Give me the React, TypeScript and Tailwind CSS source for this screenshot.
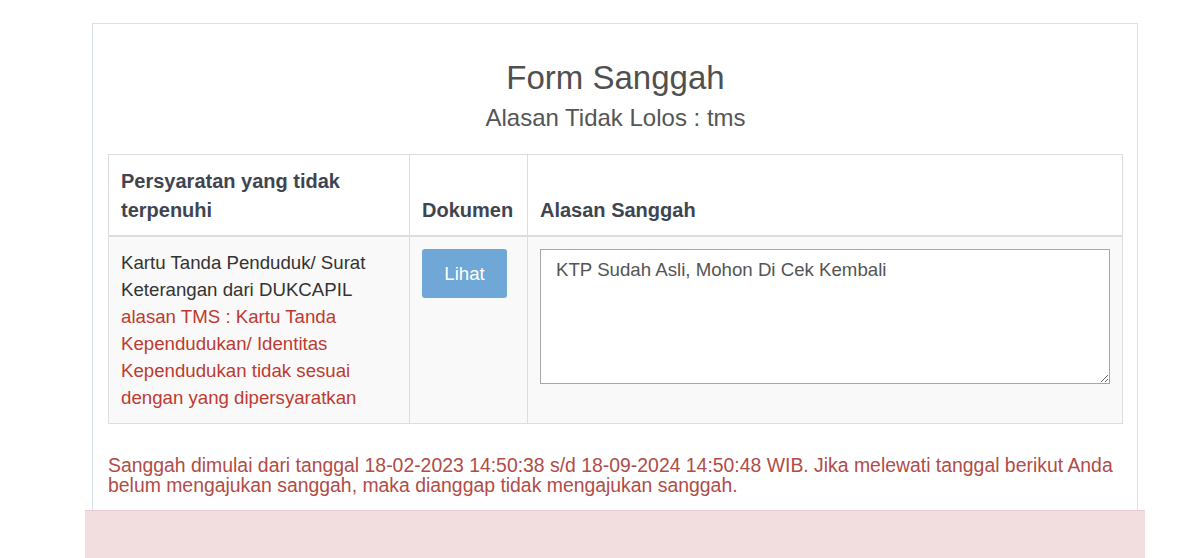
export default function App() {
  return (
    <div className="min-h-[558px] bg-white pt-[23px] font-['Liberation_Sans',Arial,sans-serif]">
      <div className="ml-[92px] w-[1046px] border border-b-0 border-[#d8e2ea] pb-[15px] pl-[15px] pr-[14px] pt-[36px]">
        <h3 className="m-0 text-center text-[33px] leading-[35px] text-[#505050]">
          Form Sanggah
        </h3>
        <h4 className="m-0 mt-[10px] text-center text-[24px] leading-[26px] text-[#555]">
          Alasan Tidak Lolos : tms
        </h4>

        <table className="mt-[23px] w-full table-fixed border border-[#ddd] text-[18.67px] leading-[27px] text-[#333]">
          <thead>
            <tr className="bg-white">
              <th className="w-[301px] border border-b-2 border-[#ddd] px-[12px] pb-[10px] pt-[12px] text-left align-bottom text-[20px] font-bold leading-[29px] text-[#3e4551]">
                Persyaratan yang tidak terpenuhi
              </th>
              <th className="w-[118px] border border-b-2 border-[#ddd] px-[12px] pb-[10px] pt-[12px] text-left align-bottom text-[20px] font-bold leading-[29px] text-[#3e4551]">
                Dokumen
              </th>
              <th className="border border-b-2 border-[#ddd] px-[12px] pb-[10px] pt-[12px] text-left align-bottom text-[20px] font-bold leading-[29px] text-[#3e4551]">
                Alasan Sanggah
              </th>
            </tr>
          </thead>
          <tbody>
            <tr className="bg-[#f9f9f9]">
              <td className="border border-[#ddd] px-[12px] py-[12px] align-top">
                Kartu Tanda Penduduk/ Surat Keterangan dari DUKCAPIL
                <br />
                <span className="text-[#bd3b31]">
                  alasan TMS : Kartu Tanda Kependudukan/ Identitas Kependudukan
                  tidak sesuai dengan yang dipersyaratkan
                </span>
              </td>
              <td className="border border-[#ddd] px-[12px] py-[12px] align-top">
                <button className="flex h-[49px] w-[85px] items-center justify-center rounded-[3px] bg-[#6fa7d7] text-[18.67px] text-white">
                  Lihat
                </button>
              </td>
              <td className="border border-[#ddd] px-[12px] py-[12px] align-top">
                <textarea
                  defaultValue="KTP Sudah Asli, Mohon Di Cek Kembali"
                  className="block h-[135px] w-full border border-[#a6a6a6] bg-white px-[15px] pt-[6px] text-[18.67px] leading-[27px] text-[#555] outline-none"
                />
              </td>
            </tr>
          </tbody>
        </table>

        <h5 className="m-0 mt-[31px] text-[19.4px] font-normal leading-[20px] text-[#b14c47]">
          Sanggah dimulai dari tanggal 18-02-2023 14:50:38 s/d 18-09-2024
          14:50:48 WIB. Jika melewati tanggal berikut Anda belum mengajukan
          sanggah, maka dianggap tidak mengajukan sanggah.
        </h5>
      </div>
      <div className="ml-[85px] h-[48px] w-[1060px] border-t border-[#e8cdd0] bg-[#f2dede]" />
    </div>
  );
}
